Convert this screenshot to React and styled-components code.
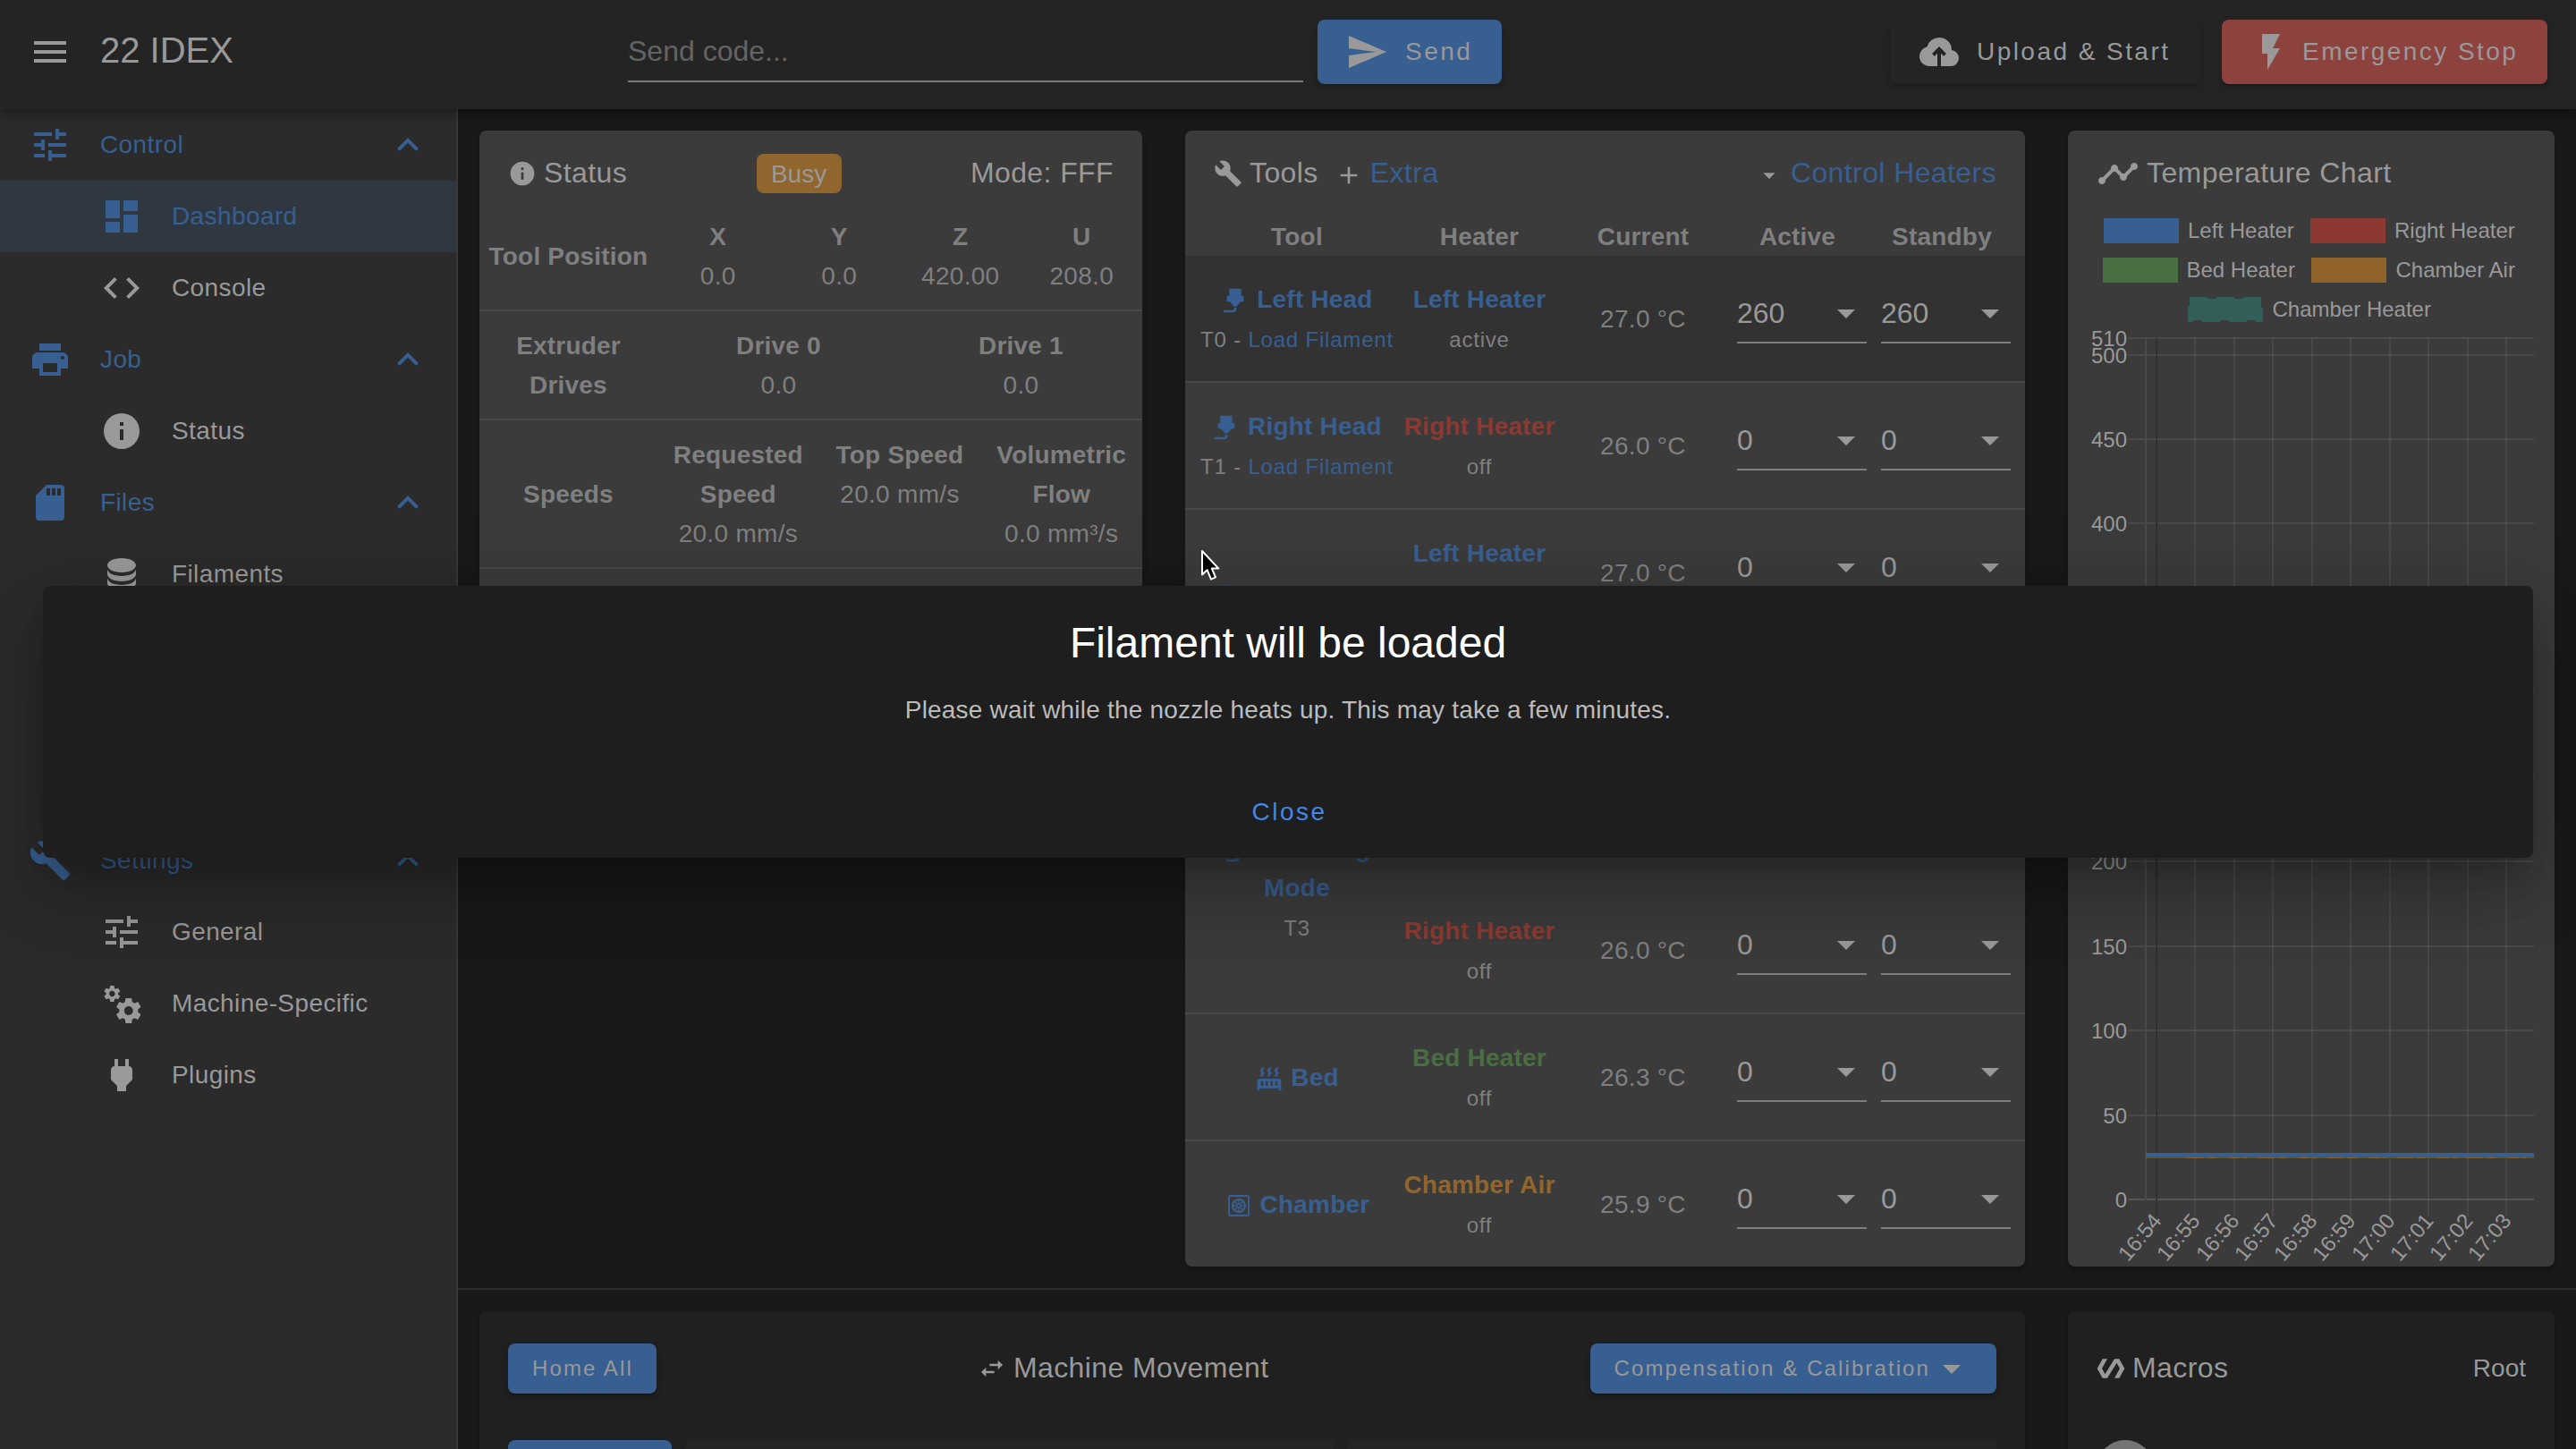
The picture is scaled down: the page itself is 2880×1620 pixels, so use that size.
import { Fragment } from 'react';
import styled, { createGlobalStyle, css } from 'styled-components';

const azul = "#375f91";
const vermelho = "#8c3a31";
const verde = "#496e41";
const laranja = "#92652d";
const claro = "#999999";
const apagado = "#7f7f7f";

const icones = {
    menu: "M3,6H21V8H3V6M3,11H21V13H3V11M3,16H21V18H3V16Z",
    send: "M2,21L23,12L2,3V10L17,12L2,14V21Z",
    upload: "M11 20H6.5Q4.22 20 2.61 18.43 1 16.85 1 14.58 1 12.63 2.17 11.1 3.35 9.57 5.25 9.15 5.88 6.85 7.75 5.43 9.63 4 12 4 14.93 4 16.96 6.04 19 8.07 19 11 20.73 11.2 21.86 12.5 23 13.78 23 15.5 23 17.38 21.69 18.69 20.38 20 18.5 20H13V12.85L14.6 14.4L16 13L12 9L8 13L9.4 14.4L11 12.85Z",
    flash: "M7,2V13H10V22L17,10H13L17,2H7Z",
    tune: "M3,17V19H9V17H3M3,5V7H13V5H3M13,21V19H21V17H13V15H11V21H13M7,9V11H3V13H7V15H9V9H7M21,13V11H11V13H21M15,9H17V7H21V5H17V3H15V9Z",
    dashboard: "M13,3V9H21V3M13,21H21V11H13M3,21H11V15H3M3,13H11V3H3V13Z",
    code: "M14.6,16.6L19.2,12L14.6,7.4L16,6L22,12L16,18L14.6,16.6M9.4,16.6L4.8,12L9.4,7.4L8,6L2,12L8,18L9.4,16.6Z",
    printer: "M18,3H6V7H18M19,12A1,1 0 0,1 18,11A1,1 0 0,1 19,10A1,1 0 0,1 20,11A1,1 0 0,1 19,12M16,19H8V14H16M19,8H5A3,3 0 0,0 2,11V17H6V21H18V17H22V11A3,3 0 0,0 19,8Z",
    info: "M13,9H11V7H13M13,17H11V11H13M12,2A10,10 0 0,0 2,12A10,10 0 0,0 12,22A10,10 0 0,0 22,12A10,10 0 0,0 12,2Z",
    sd: "M18,8H16V4H18M15,8H13V4H15M12,8H10V4H12M18,2H10L4,8V20A2,2 0 0,0 6,22H18A2,2 0 0,0 20,20V4A2,2 0 0,0 18,2Z",
    database: "M12,3C7.58,3 4,4.79 4,7C4,9.21 7.58,11 12,11C16.42,11 20,9.21 20,7C20,4.79 16.42,3 12,3M4,9V12C4,14.21 7.58,16 12,16C16.42,16 20,14.21 20,12V9C20,11.21 16.42,13 12,13C7.58,13 4,11.21 4,9M4,14V17C4,19.21 7.58,21 12,21C16.42,21 20,19.21 20,17V14C20,16.21 16.42,18 12,18C7.58,18 4,16.21 4,14Z",
    wrench: "M22.7,19L13.6,9.9C14.5,7.6 14,4.9 12.1,3C10.1,1 7.1,0.6 4.7,1.7L9,6L6,9L1.6,4.7C0.4,7.1 0.9,10.1 2.9,12.1C4.8,14 7.5,14.5 9.8,13.6L18.9,22.7C19.3,23.1 19.9,23.1 20.3,22.7L22.6,20.4C23.1,20 23.1,19.3 22.7,19Z",
    cogs: "M15.9,18.45C17.25,18.45 18.35,17.35 18.35,16C18.35,14.65 17.25,13.55 15.9,13.55C14.54,13.55 13.45,14.65 13.45,16C13.45,17.35 14.54,18.45 15.9,18.45M21.1,16.68L22.58,17.84C22.71,17.95 22.75,18.13 22.66,18.29L21.26,20.71C21.17,20.86 21,20.92 20.83,20.86L19.09,20.16C18.73,20.44 18.33,20.67 17.91,20.85L17.64,22.7C17.62,22.87 17.47,23 17.3,23H14.5C14.32,23 14.18,22.87 14.15,22.7L13.89,20.85C13.46,20.67 13.07,20.44 12.71,20.16L10.96,20.86C10.81,20.92 10.62,20.86 10.54,20.71L9.14,18.29C9.05,18.13 9.09,17.95 9.22,17.84L10.7,16.68L10.65,16L10.7,15.31L9.22,14.16C9.09,14.05 9.05,13.86 9.14,13.71L10.54,11.29C10.62,11.13 10.81,11.07 10.96,11.13L12.71,11.84C13.07,11.56 13.46,11.32 13.89,11.15L14.15,9.29C14.18,9.13 14.32,9 14.5,9H17.3C17.47,9 17.62,9.13 17.64,9.29L17.91,11.15C18.33,11.32 18.73,11.56 19.09,11.84L20.83,11.13C21,11.07 21.17,11.13 21.26,11.29L22.66,13.71C22.75,13.86 22.71,14.05 22.58,14.16L21.1,15.31L21.15,16L21.1,16.68M6.69,8.07C7.56,8.07 8.26,7.37 8.26,6.5C8.26,5.63 7.56,4.92 6.69,4.92A1.58,1.58 0 0,0 5.11,6.5C5.11,7.37 5.82,8.07 6.69,8.07M10.03,6.94L11,7.68C11.07,7.75 11.09,7.87 11.03,7.97L10.13,9.53C10.08,9.63 9.96,9.67 9.86,9.63L8.74,9.18L8,9.62L7.81,10.81C7.79,10.92 7.7,11 7.59,11H5.79C5.67,11 5.58,10.92 5.56,10.81L5.4,9.62L4.64,9.18L3.52,9.63C3.41,9.67 3.3,9.63 3.24,9.53L2.34,7.97C2.28,7.87 2.31,7.75 2.39,7.68L3.34,6.94L3.31,6.5L3.34,6.06L2.39,5.32C2.31,5.25 2.28,5.13 2.34,5.03L3.24,3.47C3.3,3.37 3.41,3.33 3.52,3.37L4.63,3.82L5.4,3.38L5.56,2.19C5.58,2.08 5.67,2 5.79,2H7.59C7.7,2 7.79,2.08 7.81,2.19L8,3.38L8.74,3.82L9.86,3.37C9.96,3.33 10.08,3.37 10.13,3.47L11.03,5.03C11.09,5.13 11.07,5.25 11,5.32L10.03,6.06L10.06,6.5L10.03,6.94Z",
    plug: "M16,7V3H14V7H10V3H8V7H8C7,7 6,8 6,9V14.5L9.5,18V21H14.5V18L18,14.5V9C18,8 17,7 16,7Z",
    chevron: "M7.41,15.41L12,10.83L16.59,15.41L18,14L12,8L6,14L7.41,15.41Z",
    plus: "M19,13H13V19H11V13H5V11H11V5H13V11H19V13Z",
    menuDown: "M7,10L12,15L17,10H7Z",
    nozzle: "M7,2H17V8H19V13H16.5L13,17H11L7.5,13H5V8H7V2M10,22H2V20H10A1,1 0 0,0 11,19V18H13V19A3,3 0 0,1 10,22Z",
    radiator: "M7.95,3L6.53,5.19L7.95,7.4H7.94L5.95,10.5L4.22,9.6L5.64,7.39L4.22,5.19L6.22,2.09L7.95,3M13.95,2.89L12.53,5.1L13.95,7.3L13.94,7.31L11.95,10.4L10.22,9.5L11.64,7.3L10.22,5.1L12.22,2L13.95,2.89M20,2.89L18.56,5.1L20,7.3V7.31L18,10.4L16.25,9.5L17.67,7.3L16.25,5.1L18.25,2L20,2.89M2,22V14A2,2 0 0,1 4,12H20A2,2 0 0,1 22,14V22H20V20H4V22H2M6,14A1,1 0 0,0 5,15V17A1,1 0 0,0 6,18A1,1 0 0,0 7,17V15A1,1 0 0,0 6,14M10,14A1,1 0 0,0 9,15V17A1,1 0 0,0 10,18A1,1 0 0,0 11,17V15A1,1 0 0,0 10,14M14,14A1,1 0 0,0 13,15V17A1,1 0 0,0 14,18A1,1 0 0,0 15,17V15A1,1 0 0,0 14,14M18,14A1,1 0 0,0 17,15V17A1,1 0 0,0 18,18A1,1 0 0,0 19,17V15A1,1 0 0,0 18,14Z",
    timeline: "M23,8C23,9.1 22.1,10 21,10C20.82,10 20.65,9.97 20.5,9.93L16.93,13.5C16.97,13.65 17,13.82 17,14C17,15.1 16.1,16 15,16C13.9,16 13,15.1 13,14C13,13.82 13.03,13.65 13.07,13.5L10.5,10.93C10.35,10.97 10.18,11 10,11C9.82,11 9.65,10.97 9.5,10.93L4.93,15.5C4.97,15.65 5,15.82 5,16C5,17.1 4.1,18 3,18C1.9,18 1,17.1 1,16C1,14.9 1.9,14 3,14C3.18,14 3.35,14.03 3.5,14.07L8.07,9.5C8.03,9.35 8,9.18 8,9C8,7.9 8.9,7 10,7C11.1,7 12,7.9 12,9C12,9.18 11.97,9.35 11.93,9.5L14.5,12.07C14.65,12.03 14.82,12 15,12C15.18,12 15.35,12.03 15.5,12.07L19.07,8.5C19.03,8.35 19,8.18 19,8C19,6.9 19.9,6 21,6C22.1,6 23,6.9 23,8Z",
    swap: "M21,9L17,5V8H10V10H17V13M7,11L3,15L7,19V16H14V14H7V11Z",
    polymer: "M19,4H15L7.1,16.63L4.5,12L9,4H5L0.5,12L5,20H9L16.89,7.37L19.5,12L15,20H19L23.5,12L19,4Z",
};

function Icone({ nome, tamanho = 48 }) {
    if (nome === "chamber") {
        return (
            <Svg $tamanho={tamanho} viewBox="0 0 24 24" fill="none" stroke="currentColor">
                <rect x="3.75" y="3.75" width="16.5" height="16.5" rx="1.2" strokeWidth="1.5" />
                <circle cx="12" cy="12" r="5.3" strokeWidth="1.5" />
                <circle cx="12" cy="12" r="1.4" strokeWidth="1" />
                <path d="M12 6.5V10.5M12 13.5V17.5M6.5 12H10.5M13.5 12H17.5M8.1 8.1L10.9 10.9M13.1 13.1L15.9 15.9M8.1 15.9L10.9 13.1M13.1 10.9L15.9 8.1" strokeWidth="1" />
            </Svg>
        );
    }
    return (
        <Svg $tamanho={tamanho} viewBox="0 0 24 24" fill="currentColor">
            <path d={icones[nome]} />
        </Svg>
    );
}

const menu = [
    { titulo: "Control", icone: "tune", itens: [["Dashboard", "dashboard", true], ["Console", "code"]] },
    { titulo: "Job", icone: "printer", itens: [["Status", "info"]] },
    { titulo: "Files", icone: "sd", itens: [["Filaments", "database"], ["Jobs", "code"], ["Macros", "polymer"], ["System", "cogs"]] },
    { titulo: "Settings", icone: "wrench", itens: [["General", "tune"], ["Machine-Specific", "cogs"], ["Plugins", "plug"]] },
];

const leituras = [
    { nome: "Tool Position", valores: [["X", "0.0"], ["Y", "0.0"], ["Z", "420.00"], ["U", "208.0"]] },
    { nome: "Extruder Drives", valores: [["Drive 0", "0.0"], ["Drive 1", "0.0"]] },
    { nome: "Speeds", valores: [["Requested Speed", "20.0 mm/s"], ["Top Speed", "20.0 mm/s"], ["Volumetric Flow", "0.0 mm³/s"]] },
];

const esquerdo = { nome: "Left Heater", cor: azul, atual: "27.0 °C", alvo: "0", estado: "off" };
const direito = { nome: "Right Heater", cor: vermelho, atual: "26.0 °C", alvo: "0", estado: "off" };

const ferramentas = [
    { nome: "Left Head", icone: "nozzle", id: "T0", carregar: true, ativa: true, aquecedores: [{ ...esquerdo, estado: "active", alvo: "260" }] },
    { nome: "Right Head", icone: "nozzle", id: "T1", carregar: true, aquecedores: [direito] },
    { nome: "Duplicating Mode", icone: "nozzle", id: "T2", aquecedores: [esquerdo, direito] },
    { nome: "Mirroring Mode", icone: "nozzle", id: "T3", aquecedores: [esquerdo, direito] },
    { nome: "Bed", icone: "radiator", aquecedores: [{ nome: "Bed Heater", cor: verde, atual: "26.3 °C", alvo: "0", estado: "off" }] },
    { nome: "Chamber", icone: "chamber", aquecedores: [{ nome: "Chamber Air", cor: laranja, atual: "25.9 °C", alvo: "0", estado: "off" }] },
];

function Cabecalho() {
    return (
        <Topo>
            <Icone nome="menu" />
            <Nome>22 IDEX</Nome>
            <Codigo placeholder="Send code..." />
            <BotaoTopo $largura={206} $espaco={19} $cor={azul}>
                <Icone nome="send" />
                <span>Send</span>
            </BotaoTopo>
            <Acoes>
                <BotaoTopo $largura={347} $espaco={18} $cor="#242424">
                    <Icone nome="upload" />
                    <span>Upload &amp; Start</span>
                </BotaoTopo>
                <BotaoTopo $largura={364} $espaco={11} $cor="#8e423e">
                    <Icone nome="flash" />
                    <span>Emergency Stop</span>
                </BotaoTopo>
            </Acoes>
        </Topo>
    );
}

function MenuLateral() {
    return (
        <Lateral>
            {menu.map(({ titulo, icone, itens }) =>
                <Fragment key={titulo}>
                    <Grupo>
                        <Icone nome={icone} />
                        <span>{titulo}</span>
                        <Icone nome="chevron" />
                    </Grupo>
                    {itens.map(([item, iconeItem, ativo]) =>
                        <Item key={item} $ativo={ativo}>
                            <Icone nome={iconeItem} />
                            <span>{item}</span>
                        </Item>
                    )}
                </Fragment>
            )}
        </Lateral>
    );
}

function Status() {
    return (
        <Cartao $largura={741}>
            <Titulo $separado>
                <GrupoTitulo>
                    <Icone nome="info" tamanho={32} />
                    <span>Status</span>
                </GrupoTitulo>
                <Etiqueta>Busy</Etiqueta>
                <span>Mode: FFF</span>
            </Titulo>
            {leituras.map(({ nome, valores }) =>
                <Leitura key={nome}>
                    <NomeLeitura>{nome}</NomeLeitura>
                    <Valores>
                        {valores.map(([rotulo, valor]) =>
                            <Valor key={rotulo}>
                                <strong>{rotulo}</strong>
                                <span>{valor}</span>
                            </Valor>
                        )}
                    </Valores>
                </Leitura>
            )}
            <Leitura />
        </Cartao>
    );
}

function Seletor({ valor }) {
    return (
        <Alvo>
            <span>{valor}</span>
            <Icone nome="menuDown" />
        </Alvo>
    );
}

function Ferramentas() {
    return (
        <Cartao $largura={939}>
            <Titulo>
                <Icone nome="wrench" tamanho={32} />
                <span>Tools</span>
                <LinkTitulo>
                    <Icone nome="plus" tamanho={32} />
                    <a>Extra</a>
                </LinkTitulo>
                <LinkTitulo $direita>
                    <Icone nome="menuDown" tamanho={32} />
                    <a>Control Heaters</a>
                </LinkTitulo>
            </Titulo>
            <Colunas>
                <span>Tool</span>
                <span>Heater</span>
                <span>Current</span>
                <Coluna>Active</Coluna>
                <Coluna>Standby</Coluna>
            </Colunas>
            {ferramentas.map(({ nome, icone, id, carregar, ativa, aquecedores }) =>
                <Ferramenta key={nome} $ativa={ativa}>
                    <Cabeca>
                        <strong><Icone nome={icone} tamanho={32} /> {nome}</strong>
                        {id && <div><small>{id}{carregar && <> - <a>Load Filament</a></>}</small></div>}
                    </Cabeca>
                    <div>
                        {aquecedores.map((aquecedor) =>
                            <Aquecedor key={aquecedor.nome}>
                                <NomeAquecedor $cor={aquecedor.cor}>
                                    <strong>{aquecedor.nome}</strong>
                                    <div><small>{aquecedor.estado}</small></div>
                                </NomeAquecedor>
                                <Atual>{aquecedor.atual}</Atual>
                                <Seletor valor={aquecedor.alvo} />
                                <Seletor valor={aquecedor.alvo} />
                            </Aquecedor>
                        )}
                    </div>
                </Ferramenta>
            )}
        </Cartao>
    );
}

const legenda = [
    { nome: "Left Heater", cor: azul, x: 40, y: 18, texto: 134 },
    { nome: "Right Heater", cor: vermelho, x: 271, y: 18, texto: 365 },
    { nome: "Bed Heater", cor: verde, x: 39, y: 62, texto: 132.5 },
    { nome: "Chamber Air", cor: "#90632b", x: 272, y: 62, texto: 366.5 },
];

const temperaturas = [510, 500, 450, 400, 350, 300, 250, 200, 150, 100, 50, 0];
const horas = ["16:54", "16:55", "16:56", "16:57", "16:58", "16:59", "17:00", "17:01", "17:02", "17:03"];

function Grafico() {
    const alturaDe = (valor) => Math.round(1115 - valor * 1.889);
    const posicaoDe = (indice) => Math.round(99 + indice * 43.45);

    return (
        <Cartao $largura={544}>
            <Titulo>
                <Icone nome="timeline" />
                <span>Temperature Chart</span>
            </Titulo>
            <Desenho viewBox="0 0 544 1190">
                {legenda.map(({ nome, cor, x, y, texto }) =>
                    <g key={nome}>
                        <rect x={x} y={y} width="84" height="28" fill={cor} />
                        <text x={texto} y={y + 22}>{nome}</text>
                    </g>
                )}
                <rect x="136" y="108" width="80" height="24" fill="#325f58" />
                <rect x="136" y="108" width="80" height="24" fill="none" stroke="#325f58" strokeWidth="4" strokeDasharray="20 10" />
                <text x="228.5" y="128">Chamber Heater</text>

                {temperaturas.map((valor) =>
                    <g key={valor}>
                        <rect x="67.5" y={alturaDe(valor) - 1} width="453.5" height="2" fill={valor === 0 ? "#565656" : "#4a4a4a"} />
                        <text x="66" y={alturaDe(valor) + 9} textAnchor="end">{valor}</text>
                    </g>
                )}
                <rect x="86" y="151" width="2" height="965" fill="#4a4a4a" />
                {horas.map((hora, indice) =>
                    <g key={hora}>
                        <rect x={posicaoDe(indice) - 1} y="152" width="2" height="982" fill={indice === 0 ? "#303030" : "#fff"} opacity={indice === 0 ? 1 : 0.07} />
                        <text transform={`translate(${posicaoDe(indice) + 0.5} 1134) rotate(-50)`} dy="8.4" textAnchor="end">{hora}</text>
                    </g>
                )}

                <path d="M87 1068.2H521" stroke="#60562f" strokeWidth="1.6" />
                <path d="M134 1068.4H521" stroke="#8c602c" strokeWidth="1.2" strokeDasharray="18 5 9 14 12 3 5 12" />
                <path d="M87 1065.4H521" stroke={azul} strokeWidth="4.6" />
            </Desenho>
        </Cartao>
    );
}

function Movimento() {
    return (
        <Painel $largura={1728}>
            <Titulo $separado $alto>
                <BotaoPequeno>Home All</BotaoPequeno>
                <GrupoTitulo>
                    <Icone nome="swap" tamanho={32} />
                    <span>Machine Movement</span>
                </GrupoTitulo>
                <BotaoPequeno>
                    Compensation &amp; Calibration
                    <Icone nome="menuDown" />
                </BotaoPequeno>
            </Titulo>
            <Eixos>
                <Eixo $cor={azul} />
                <Eixo />
                <Eixo />
            </Eixos>
        </Painel>
    );
}

function Macros() {
    return (
        <Painel $largura={544}>
            <Titulo $separado $alto>
                <GrupoTitulo>
                    <Icone nome="polymer" tamanho={32} />
                    <span>Macros</span>
                </GrupoTitulo>
                <Raiz>Root</Raiz>
            </Titulo>
            <Avatar />
        </Painel>
    );
}

export default function App() {
    return (
        <>
            <EstiloGlobal />
            <Tela>
                <Cabecalho />
                <Corpo>
                    <MenuLateral />
                    <Conteudo>
                        <Linha>
                            <Status />
                            <Ferramentas />
                            <Grafico />
                        </Linha>
                        <Divisor />
                        <Linha>
                            <Movimento />
                            <Macros />
                        </Linha>
                    </Conteudo>
                </Corpo>
                <Camada>
                    <Dialogo>
                        <h1>Filament will be loaded</h1>
                        <p>Please wait while the nozzle heats up. This may take a few minutes.</p>
                        <Fechar>Close</Fechar>
                    </Dialogo>
                </Camada>
                <Cursor viewBox="0 0 24 36">
                    <path d="M2 2V28.5L7.6 23.2L12 33.6L17 31.4L12.8 21.6H20.4Z" fill="#000" stroke="#fff" strokeWidth="2" strokeLinejoin="round" />
                </Cursor>
            </Tela>
        </>
    );
}

const EstiloGlobal = createGlobalStyle`
    * {
        box-sizing: border-box;
    }

    body {
        margin: 0;
        background: #191919;
        font-family: "Liberation Sans", Arial, sans-serif;
        font-size: 28px;
        color: ${claro};
        overflow: hidden;
    }

    a {
        color: ${azul};
    }
`

const Svg = styled.svg`
    width: ${({ $tamanho }) => $tamanho}px;
    height: ${({ $tamanho }) => $tamanho}px;
    flex-shrink: 0;
`

const Tela = styled.div`
    width: 2880px;
    height: 1620px;
    position: relative;
    display: flex;
    flex-direction: column;
    overflow: hidden;
`

const Topo = styled.header`
    height: 122px;
    flex-shrink: 0;
    padding: 0 32px 6px;
    display: flex;
    align-items: center;
    background: #242424;
    box-shadow: 0 4px 8px -2px rgba(0, 0, 0, 0.2), 0 8px 10px rgba(0, 0, 0, 0.12), 0 2px 20px rgba(0, 0, 0, 0.1);
    z-index: 1;
`

const Nome = styled.div`
    width: 590px;
    margin-left: 32px;
    padding-bottom: 4px;
    font-size: 40px;
`

const Codigo = styled.input`
    width: 755px;
    height: 68px;
    margin: 0 16px 0 0;
    padding: 0;
    border: 0;
    border-bottom: 2px solid #7a7a7a;
    background: none;
    font-family: inherit;
    font-size: 32px;

    &::placeholder {
        color: #646464;
        opacity: 1;
    }
`

const sombraBotao = css`
    box-shadow: 0 6px 2px -4px rgba(0, 0, 0, 0.12), 0 4px 4px rgba(0, 0, 0, 0.1), 0 2px 10px rgba(0, 0, 0, 0.08);
`

const BotaoTopo = styled.div`
    width: ${({ $largura }) => $largura}px;
    height: 72px;
    padding-left: 31px;
    display: flex;
    align-items: center;
    gap: ${({ $espaco }) => $espaco}px;
    border-radius: 8px;
    background: ${({ $cor }) => $cor};
    letter-spacing: 2.45px;
    white-space: nowrap;
    ${sombraBotao}
`

const Acoes = styled.div`
    margin-left: auto;
    display: flex;
    gap: 24px;
`

const Corpo = styled.div`
    flex: 1;
    min-height: 0;
    display: flex;
`

const Lateral = styled.nav`
    width: 512px;
    flex-shrink: 0;
    background: #2b2b2b;
    border-right: 2px solid #393939;
`

const Grupo = styled.div`
    height: 80px;
    padding: 0 30px 0 32px;
    display: flex;
    align-items: center;
    gap: 32px;
    color: ${azul};
    letter-spacing: 0.4px;

    svg:last-child {
        margin-left: auto;
    }
`

const Item = styled.div`
    height: 80px;
    padding-left: 112px;
    display: flex;
    align-items: center;
    gap: 32px;
    color: ${({ $ativo }) => $ativo ? azul : claro};
    background: ${({ $ativo }) => $ativo ? "#2f3840" : "none"};
    letter-spacing: 0.4px;
`

const Conteudo = styled.main`
    flex: 1;
    padding-top: 24px;
    display: flex;
    flex-direction: column;
    gap: 24px;
`

const Linha = styled.div`
    padding-left: 24px;
    display: flex;
    align-items: flex-start;
    gap: 48px;
`

const Divisor = styled.div`
    height: 2px;
    flex-shrink: 0;
    background: #2b2b2b;
`

const Cartao = styled.section`
    width: ${({ $largura }) => $largura}px;
    border-radius: 8px;
    background: #3b3b3b;
    color: ${apagado};
    box-shadow: 0 6px 2px -4px rgba(0, 0, 0, 0.12), 0 4px 4px rgba(0, 0, 0, 0.08), 0 2px 10px rgba(0, 0, 0, 0.07);
    overflow: hidden;
`

const Painel = styled(Cartao)`
    height: 400px;
    background: #202020;
`

const Titulo = styled.div`
    height: ${({ $alto }) => $alto ? 144 : 80}px;
    padding: ${({ $alto }) => $alto ? "0 32px 16px" : "16px 32px 0"};
    display: flex;
    align-items: center;
    justify-content: ${({ $separado }) => $separado ? "space-between" : "flex-start"};
    gap: 8px;
    color: ${claro};
    font-size: 32px;
    letter-spacing: 0.4px;
    white-space: nowrap;

    span, a {
        padding-bottom: 2px;
    }
`

const GrupoTitulo = styled.div`
    display: flex;
    align-items: center;
    gap: 8px;
`

const LinkTitulo = styled.div`
    margin-left: ${({ $direita }) => $direita ? "auto" : "10px"};
    display: flex;
    align-items: center;
    gap: 8px;

    svg {
        margin-top: 4px;
    }
`

const Etiqueta = styled.div`
    width: 95px;
    height: 44px;
    border-radius: 8px;
    background: #90662e;
    font-size: 28px;
    letter-spacing: 0;
    line-height: 45px;
    text-align: center;
`

const Leitura = styled.div`
    min-height: 122px;
    padding: 17px 0 15px;
    display: flex;
    align-items: center;
    line-height: 44px;
    letter-spacing: 0.3px;
    text-align: center;

    &:not(:last-child) {
        border-bottom: 2px solid #484848;
    }
`

const NomeLeitura = styled.div`
    width: 199px;
    padding: 0 8px;
    font-weight: bold;
    letter-spacing: 0.2px;
`

const Valores = styled.div`
    flex: 1;
    display: flex;
`

const Valor = styled.div`
    flex: 1 1 0;
    display: flex;
    flex-direction: column;

    strong {
        letter-spacing: 0.2px;
    }
`

const Colunas = styled.div`
    height: 60px;
    padding-top: 17px;
    display: grid;
    grid-template-columns: 250px 158px 208px 161px 162px;
    align-items: center;
    font-weight: bold;
    letter-spacing: 0.2px;
    text-align: center;
`

const Coluna = styled.span`
    padding-right: 24px;
`

const Ferramenta = styled.div`
    display: grid;
    grid-template-columns: 250px 1fr;
    align-items: center;
    background: ${({ $ativa }) => $ativa ? "#323232" : "none"};
    line-height: 44px;
    letter-spacing: 0.3px;
    text-align: center;

    &:not(:last-child) {
        border-bottom: 2px solid #484848;
    }

    strong {
        letter-spacing: 0.2px;
    }

    small {
        font-size: 24px;
        letter-spacing: 0.8px;
    }
`

const Cabeca = styled.div`
    padding: 2px 16px 0;

    strong {
        color: ${azul};
    }

    svg {
        vertical-align: -8px;
    }
`

const Aquecedor = styled.div`
    height: 140px;
    display: grid;
    grid-template-columns: 158px 208px 161px 162px;
    align-items: center;
`

const NomeAquecedor = styled.div`
    padding-top: 2px;
    display: flex;
    flex-direction: column;
    align-items: center;
    white-space: nowrap;

    strong {
        color: ${({ $cor }) => $cor};
    }
`

const Atual = styled.div`
    padding-top: 2px;
`

const Alvo = styled.div`
    width: 145px;
    height: 66px;
    margin: 0 0 10px 1px;
    display: flex;
    align-items: center;
    justify-content: space-between;
    border-bottom: 2px solid #7e7e7e;
    color: ${claro};
    font-size: 32px;
    letter-spacing: 0;

    span {
        padding-bottom: 1px;
    }

    svg {
        margin-right: -1px;
    }
`

const Desenho = styled.svg`
    width: 544px;
    height: 1190px;
    display: block;

    text {
        fill: ${claro};
        font-size: 24px;
    }
`

const BotaoPequeno = styled.div`
    height: 56px;
    padding: 0 26px 0 27px;
    display: flex;
    align-items: center;
    border-radius: 8px;
    background: ${azul};
    font-size: 24px;
    letter-spacing: 2.1px;
    ${sombraBotao}
`

const Eixos = styled.div`
    padding: 0 32px;
    display: grid;
    grid-template-columns: 183px 724px 725px;
    gap: 16px;
`

const Eixo = styled.div`
    height: 72px;
    border-radius: ${({ $cor }) => $cor ? "8px" : "0"};
    background: ${({ $cor }) => $cor || "#242424"};
`

const Raiz = styled.div`
    font-size: 28px;
    letter-spacing: 0;
`

const Avatar = styled.div`
    width: 64px;
    height: 64px;
    margin-left: 32px;
    border-radius: 50%;
    background: #757575;
`

const Camada = styled.div`
    position: absolute;
    inset: 0;
    padding: 655px 48px 0;
    z-index: 2;
`

const Dialogo = styled.div`
    height: 304px;
    display: flex;
    flex-direction: column;
    align-items: center;
    border-radius: 8px;
    background: #1e1e1e;
    box-shadow: 0 22px 30px -14px rgba(0, 0, 0, 0.2), 0 48px 76px 6px rgba(0, 0, 0, 0.14), 0 18px 92px 16px rgba(0, 0, 0, 0.12);

    h1 {
        margin: 32px 0 0;
        color: #ffffff;
        font-size: 48px;
        font-weight: normal;
        line-height: 64px;
    }

    p {
        margin: 21px 0 0;
        color: #bbbbbb;
        line-height: 44px;
        letter-spacing: 0.2px;
    }
`

const Fechar = styled.div`
    margin-top: 56px;
    padding-left: 3px;
    color: #4387e3;
    line-height: 72px;
    letter-spacing: 2.5px;
`

const Cursor = styled.svg`
    width: 24px;
    height: 36px;
    position: absolute;
    left: 1342px;
    top: 614px;
    z-index: 3;
`
